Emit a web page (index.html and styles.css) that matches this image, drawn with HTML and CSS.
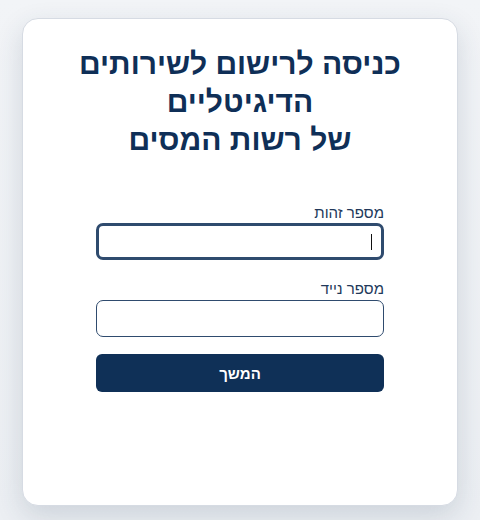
FILE: index.html
```html
<!DOCTYPE html>
<html lang="he" dir="rtl">
<head>
<meta charset="utf-8">
<title>כניסה</title>
<link rel="stylesheet" href="styles.css">
</head>
<body>
<main class="card">
  <h1 class="title">כניסה לרישום לשירותים<br>הדיגיטליים<br>של רשות המסים</h1>
  <form class="form">
    <label class="label" for="id">מספר זהות</label>
    <div class="field">
      <input class="input input-focus" id="id" type="text">
      <span class="caret"></span>
    </div>
    <label class="label label-2" for="phone">מספר נייד</label>
    <input class="input" id="phone" type="text">
    <button class="btn" type="button">המשך</button>
  </form>
</main>
</body>
</html>
```
FILE: styles.css
```css
* { box-sizing: border-box; }
html, body { margin: 0; height: 100%; }
body {
  background: linear-gradient(180deg, #f2f4f7 0%, #eceff3 100%);
  padding: 18px 22px 14px;
  font-family: "Liberation Sans", Arial, sans-serif;
}
.card {
  width: 436px;
  height: 488px;
  background: #fff;
  border: 1px solid #d6dbe3;
  border-radius: 16px;
  box-shadow: 0 10px 28px rgba(40, 60, 90, 0.16);
  padding: 26px 0 0;
}
.title {
  margin: 0;
  text-align: center;
  font-size: 30px;
  line-height: 38px;
  font-weight: bold;
  color: #0f2f57;
}
.form {
  width: 288px;
  margin: 44px auto 0;
  display: flex;
  flex-direction: column;
}
.label {
  display: block;
  font-size: 15px;
  line-height: 20px;
  color: #22385a;
}
.label-2 { margin-top: 19px; }
.field { position: relative; }
.input {
  display: block;
  width: 100%;
  height: 37px;
  margin-top: 1px;
  border: 1px solid #2f4b6e;
  border-radius: 7px;
  background: #fff;
  font: inherit;
  outline: none;
}
.input-focus {
  margin-top: 0;
  border: 3px solid #2f4b6e;
}
.caret {
  position: absolute;
  right: 12px;
  top: 11px;
  width: 1px;
  height: 16px;
  background: #111;
}
.btn {
  margin-top: 17px;
  height: 38px;
  width: 100%;
  border: none;
  border-radius: 6px;
  background: #0f3057;
  color: #fff;
  font-family: inherit;
  font-size: 15px;
  font-weight: bold;
}
```
